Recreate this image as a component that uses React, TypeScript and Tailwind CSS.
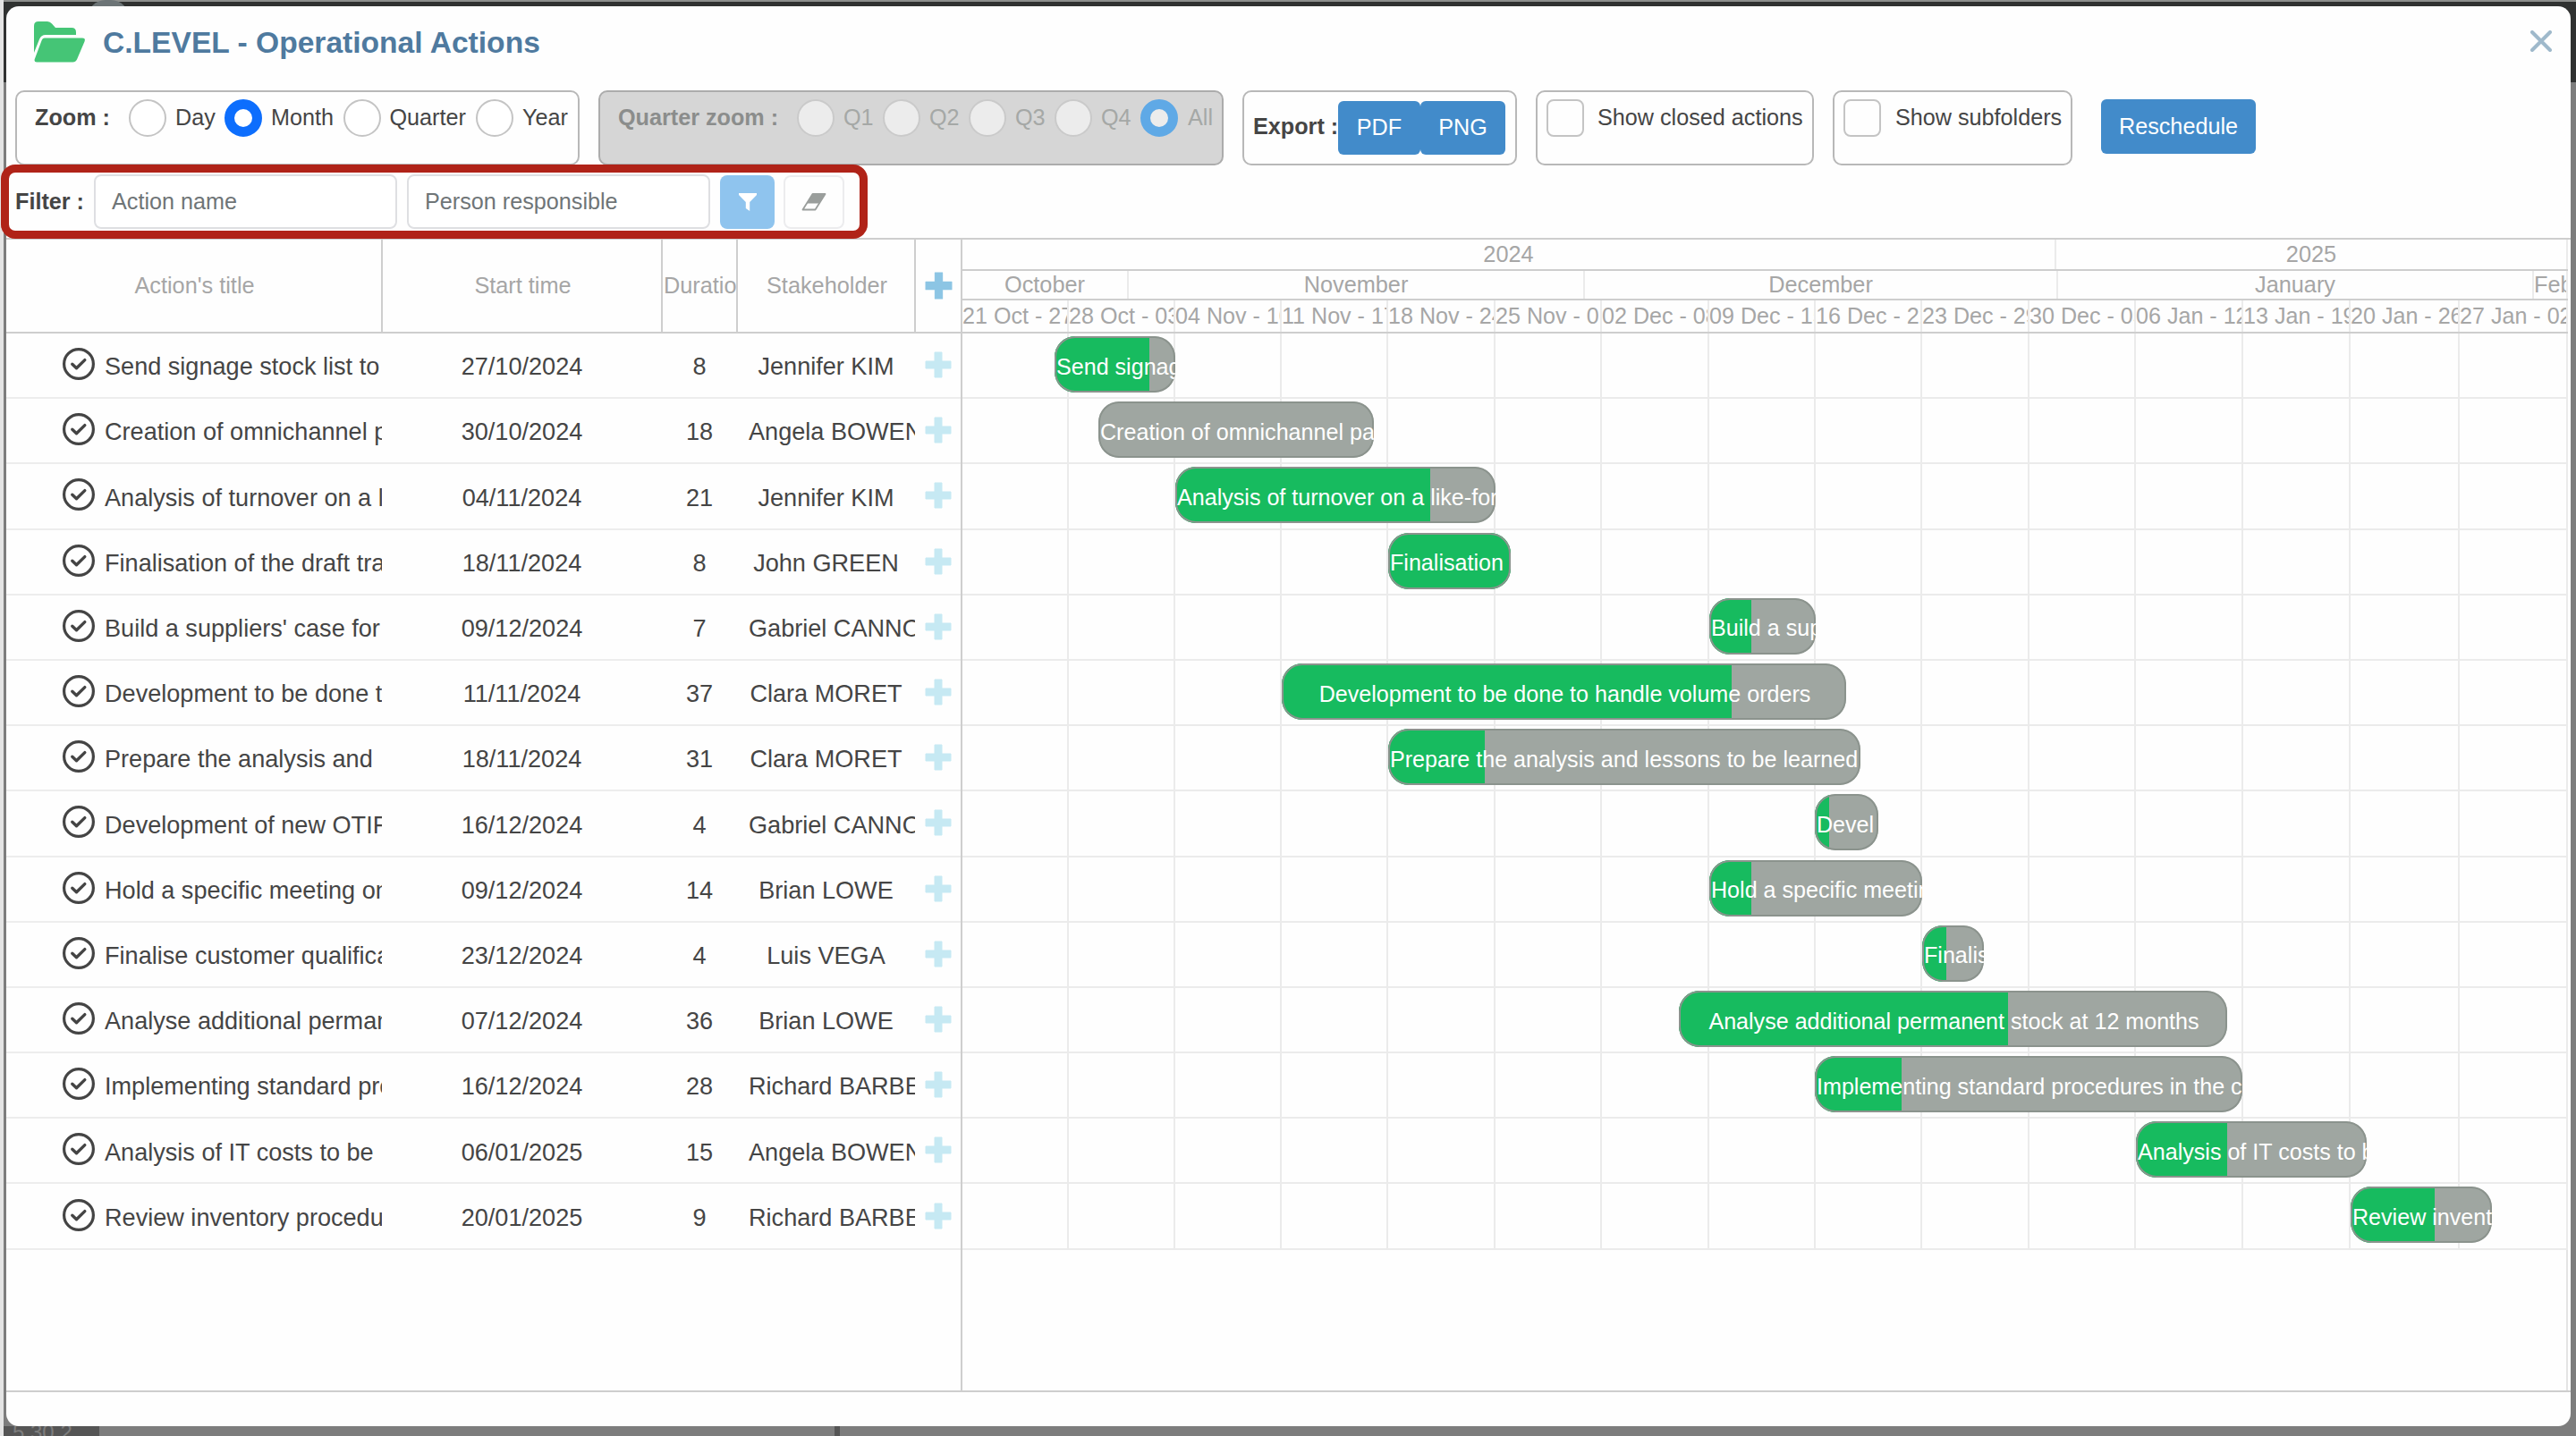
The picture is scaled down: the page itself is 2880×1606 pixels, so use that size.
import React from 'react';

type Task = {
  title: string;
  start: string;
  days: number;
  owner: string;
  left: number;
  right: number;
  done: number;
  label: string;
  centered?: boolean;
};

const CHART_LEFT = 1076;

const TASKS: Task[] = [
  { title: 'Send signage stock list to', start: '27/10/2024', days: 8, owner: 'Jennifer KIM', left: 1179, right: 1314, done: 1285, label: 'Send signage' },
  { title: 'Creation of omnichannel pa', start: '30/10/2024', days: 18, owner: 'Angela BOWEN', left: 1228, right: 1536, done: 1228, label: 'Creation of omnichannel pa' },
  { title: 'Analysis of turnover on a like', start: '04/11/2024', days: 21, owner: 'Jennifer KIM', left: 1314, right: 1672, done: 1599, label: 'Analysis of turnover on a like-for' },
  { title: 'Finalisation of the draft tran', start: '18/11/2024', days: 8, owner: 'John GREEN', left: 1552, right: 1689, done: 1689, label: 'Finalisation' },
  { title: "Build a suppliers' case for", start: '09/12/2024', days: 7, owner: 'Gabriel CANNON', left: 1911, right: 2030, done: 1958, label: 'Build a sup' },
  { title: 'Development to be done to', start: '11/11/2024', days: 37, owner: 'Clara MORET', left: 1433, right: 2064, done: 1936, label: 'Development to be done to handle volume orders', centered: true },
  { title: 'Prepare the analysis and', start: '18/11/2024', days: 31, owner: 'Clara MORET', left: 1552, right: 2080, done: 1660, label: 'Prepare the analysis and lessons to be learned' },
  { title: 'Development of new OTIF', start: '16/12/2024', days: 4, owner: 'Gabriel CANNON', left: 2029, right: 2100, done: 2045, label: 'Devel' },
  { title: 'Hold a specific meeting on', start: '09/12/2024', days: 14, owner: 'Brian LOWE', left: 1911, right: 2149, done: 1958, label: 'Hold a specific meetin' },
  { title: 'Finalise customer qualificat', start: '23/12/2024', days: 4, owner: 'Luis VEGA', left: 2149, right: 2218, done: 2176, label: 'Finalis' },
  { title: 'Analyse additional perman', start: '07/12/2024', days: 36, owner: 'Brian LOWE', left: 1877, right: 2490, done: 2245, label: 'Analyse additional permanent stock at 12 months', centered: true },
  { title: 'Implementing standard pro', start: '16/12/2024', days: 28, owner: 'Richard BARBER', left: 2029, right: 2507, done: 2126, label: 'Implementing standard procedures in the co' },
  { title: 'Analysis of IT costs to be', start: '06/01/2025', days: 15, owner: 'Angela BOWEN', left: 2388, right: 2646, done: 2490, label: 'Analysis of IT costs to b' },
  { title: 'Review inventory procedure', start: '20/01/2025', days: 9, owner: 'Richard BARBER', left: 2628, right: 2786, done: 2722, label: 'Review invent' },
];

const WEEKS = [
  { label: '21 Oct - 27', end: 1195 },
  { label: '28 Oct - 03', end: 1314 },
  { label: '04 Nov - 10', end: 1433 },
  { label: '11 Nov - 17', end: 1552 },
  { label: '18 Nov - 24', end: 1672 },
  { label: '25 Nov - 01', end: 1791 },
  { label: '02 Dec - 08', end: 1911 },
  { label: '09 Dec - 15', end: 2030 },
  { label: '16 Dec - 22', end: 2149 },
  { label: '23 Dec - 29', end: 2269 },
  { label: '30 Dec - 05', end: 2388 },
  { label: '06 Jan - 12', end: 2508 },
  { label: '13 Jan - 19', end: 2628 },
  { label: '20 Jan - 26', end: 2750 },
  { label: '27 Jan - 02', end: 2871 },
];

const MONTHS = [
  { label: 'October', end: 1262 },
  { label: 'November', end: 1772 },
  { label: 'December', end: 2301 },
  { label: 'January', end: 2833 },
  { label: 'Feb', end: 2871 },
];

const YEARS = [
  { label: '2024', end: 2299 },
  { label: '2025', end: 2871 },
];

function widths(cells: { end: number }[]) {
  return cells.map((c, i) => c.end - (i === 0 ? CHART_LEFT : cells[i - 1].end));
}

const WEEK_WIDTHS = widths(WEEKS);

function Radio({ label, checked, className = '' }: { label: string; checked?: boolean; className?: string }) {
  return (
    <span className={`flex items-center ${className}`}>
      {checked ? (
        <span className="h-[42px] w-[42px] shrink-0 rounded-full border-[11px] border-[#0d6efd] bg-white" />
      ) : (
        <span className="h-[42px] w-[42px] shrink-0 rounded-full border-2 border-[#c4c4c4] bg-white" />
      )}
      <span className="ml-[10px] whitespace-nowrap">{label}</span>
    </span>
  );
}

function Plus({ className }: { className: string }) {
  return (
    <svg viewBox="0 0 30 30" className={className} fill="currentColor">
      <path d="M11 1h8v10h10v8h-10v10h-8v-10h-10v-8h10z" stroke="currentColor" strokeWidth="1" strokeLinejoin="round" />
    </svg>
  );
}

function CheckBadge() {
  return (
    <svg viewBox="0 0 38 38" className="h-[38px] w-[38px] shrink-0" fill="none" stroke="#444" strokeLinecap="round" strokeLinejoin="round">
      <circle cx="19" cy="19" r="16.4" strokeWidth="3.2" />
      <path d="M11.8 19.3l4.7 4.5L25.8 14.6" strokeWidth="3.4" />
    </svg>
  );
}

function ScaleRow({ cells, center, className }: { cells: { label: string; end: number }[]; center?: boolean; className: string }) {
  const w = widths(cells);
  return (
    <div className={`flex ${className}`}>
      {cells.map((c, i) => (
        <div
          key={c.label}
          className={`flex shrink-0 items-center overflow-hidden whitespace-nowrap border-r-2 border-[#ebebeb] pt-px ${center && w[i] > 60 ? 'justify-center' : 'justify-start'}`}
          style={{ width: w[i] }}
        >
          {c.label}
        </div>
      ))}
    </div>
  );
}

function TaskRow({ task }: { task: Task }) {
  return (
    <div className="flex h-[73.2px]">
      <div className="flex w-[1067px] shrink-0 items-center border-b-2 border-[#ededed] pl-px text-[27.1px] text-[#454545]">
        <div className="flex w-[419px] shrink-0 items-center overflow-hidden pl-[61px]">
          <span className="-mt-[3px] flex">
            <CheckBadge />
          </span>
          <span className="ml-[10px] whitespace-nowrap pt-[4px]">{task.title}</span>
        </div>
        <div className="w-[313px] shrink-0 pt-[4px] text-center">{task.start}</div>
        <div className="w-[84px] shrink-0 pt-[4px] text-center">{task.days}</div>
        <div className={`w-[199px] shrink-0 overflow-hidden whitespace-nowrap pt-[4px] ${task.owner.length > 11 && task.owner !== 'Jennifer KIM' ? 'pl-[13px]' : 'text-center'}`}>{task.owner}</div>
        <div className="flex w-[51px] shrink-0 justify-center">
          <Plus className="-mt-px h-[30px] w-[30px] text-[#c6e9f3]" />
        </div>
      </div>
      <div className="w-[2px] shrink-0 bg-[#cecece]" />
      <div className="relative flex w-[1795px] shrink-0 border-b-2 border-[#ebebeb]">
        {WEEK_WIDTHS.map((w, i) => (
          <div key={i} className="shrink-0 border-r-2 border-[#ebebeb]" style={{ width: w }} />
        ))}
        <div
          className="absolute top-[3px] flex h-[63px] items-center overflow-hidden rounded-[23px] bg-[#9fa6a1]"
          style={{ left: task.left - CHART_LEFT, width: task.right - task.left }}
        >
          <div className="absolute inset-y-0 left-0 bg-[#17bb5f]" style={{ width: task.done - task.left }} />
          <div className="absolute inset-0 rounded-[23px] border-2 border-[#8b938d]" />
          <div className={`relative w-full whitespace-nowrap pl-[2px] pt-[6px] text-[25.1px] text-white ${task.centered ? 'text-center' : ''}`}>{task.label}</div>
        </div>
      </div>
    </div>
  );
}

export default function App() {
  return (
    <div className="relative h-[1606px] w-[2880px] overflow-hidden bg-[#7d7d7d] font-['Liberation_Sans',Arial,sans-serif]">
      <div className="absolute inset-x-0 top-0 h-[92px] border-t-2 border-[#8d8f8d] bg-[#303231]" />
      <div className="absolute left-0 top-0 h-full w-[4px] bg-[#e4e4e4]" />
      <div className="absolute left-[98px] top-0 h-[20px] w-[46px] rounded-t-full bg-[#6c7476]" />
      <div className="absolute bottom-0 left-[4px] h-[11px] w-[107px] overflow-hidden bg-[#555] pl-[10px] text-[24px] leading-[14px] text-[#7d7d7d]">5.30.2</div>
      <div className="absolute bottom-0 left-[933px] h-[12px] w-[6px] bg-[#555]" />

      <div className="absolute left-[7px] top-[7px] flex h-[1588px] w-[2867px] flex-col overflow-hidden rounded-[14px] bg-[#fefefe]">
        <header className="flex h-[94px] shrink-0 items-start">
          <svg viewBox="0 0 57 46" className="ml-[31px] mt-[17px] h-[46px] w-[57px]" fill="#45c576">
            <path d="M0 5Q0 0 5 0H15Q18 0 20 2.5L24 7H42Q47 7 47 12V15H13Q8 15 6 20L0 35Z" />
            <path d="M12 18.500H54Q58 18.500 56.500 22.500L48 42.500Q46.500 45.500 43.500 45.500H3Q-.5 45.500 1 41.500L8.500 21.500Q9.500 18.500 12 18.500Z" />
          </svg>
          <h1 className="ml-[20px] mt-[20px] text-[33.6px] font-bold leading-[42px] text-[#4f7a9f]">C.LEVEL - Operational Actions</h1>
          <svg viewBox="0 0 24 24" className="ml-auto mr-[21px] mt-[27px] h-[24px] w-[24px]" fill="none" stroke="#9fb9cb" strokeWidth="4" strokeLinecap="round">
            <path d="M2 2L22 22M22 2L2 22" />
          </svg>
        </header>

        <div className="flex h-[84px] shrink-0 items-start pl-[10px] text-[25.2px] text-[#454545]">
          <div className="flex h-[84px] w-[631px] shrink-0 rounded-[10px] border-2 border-[#b8b8b8] pl-[20px] pt-[8px]">
            <div className="flex h-[42px] items-center">
              <span className="w-[105px] font-bold">Zoom :</span>
              <Radio label="Day" className="w-[107px]" />
              <Radio label="Month" checked className="w-[132.500px]" />
              <Radio label="Quarter" className="w-[148.500px]" />
              <Radio label="Year" />
            </div>
          </div>
          <div className="ml-[21px] h-[84px] w-[699px] shrink-0 rounded-[10px] border-2 border-[#acacac] bg-[#d6d6d6] pl-[20px] pt-[8px]">
            <div className="flex h-[42px] items-center text-[#a5a8a6]">
              <span className="w-[200px] font-bold text-[#8b8d8c]">Quarter zoom :</span>
              {['Q1', 'Q2', 'Q3', 'Q4'].map((q) => (
                <span key={q} className="flex w-[96px] items-center">
                  <span className="h-[42px] w-[42px] rounded-full border-2 border-[#cacaca] bg-[#ececec]" />
                  <span className="ml-[10px]">{q}</span>
                </span>
              ))}
              <span className="flex items-center">
                <span className="h-[42px] w-[42px] rounded-full border-[11px] border-[#5fa9e6] bg-[#ececec]" />
                <span className="ml-[11px]">All</span>
              </span>
            </div>
          </div>
          <div className="ml-[21px] flex h-[84px] w-[307px] shrink-0 items-start rounded-[10px] border-2 border-[#b8b8b8] pl-[10px] pt-[10px]">
            <span className="w-[95px] whitespace-nowrap pt-[12px] font-bold leading-[32px]">Export :</span>
            <span className="flex h-[60px] w-[92px] items-center justify-center rounded-[6px] bg-[#428bca] text-white">PDF</span>
            <span className="flex h-[60px] w-[95px] items-center justify-center rounded-[6px] bg-[#428bca] text-white">PNG</span>
          </div>
          <div className="ml-[21px] flex h-[84px] w-[311px] shrink-0 rounded-[10px] border-2 border-[#b8b8b8] pl-[10px] pt-[8px]">
            <div className="flex h-[42px] items-center">
              <span className="h-[42px] w-[42px] rounded-[8px] border-2 border-[#c4c4c4]" />
              <span className="ml-[15px] whitespace-nowrap">Show closed actions</span>
            </div>
          </div>
          <div className="ml-[21px] flex h-[84px] w-[268px] shrink-0 rounded-[10px] border-2 border-[#b8b8b8] pl-[10px] pt-[8px]">
            <div className="flex h-[42px] items-center">
              <span className="h-[42px] w-[42px] rounded-[8px] border-2 border-[#c4c4c4]" />
              <span className="ml-[16px] whitespace-nowrap">Show subfolders</span>
            </div>
          </div>
          <span className="ml-[32px] mt-[10px] flex h-[61px] w-[173px] items-center justify-center rounded-[6px] bg-[#428bca] text-white">Reschedule</span>
        </div>

        <div className="flex h-[81px] shrink-0 items-center pl-[10px] text-[25.2px]">
          <span className="w-[88px] whitespace-nowrap font-bold text-[#454545]">Filter :</span>
          <span className="flex h-[61px] w-[339px] items-center rounded-[8px] border-2 border-[#dedfe2] bg-white pl-[18px] text-[#6f7577]">Action name</span>
          <span className="ml-[11px] flex h-[61px] w-[339px] items-center rounded-[8px] border-2 border-[#dedfe2] bg-white pl-[18px] text-[#6f7577]">Person responsible</span>
          <span className="ml-[11px] flex h-[60px] w-[61px] items-center justify-center rounded-[8px] bg-[#8fc4ee]">
            <svg viewBox="0 0 20 20" className="h-[20px] w-[20px]" fill="#fff">
              <path d="M0 0H20V2L12.200 10V20L7.800 17V10L0 2Z" />
            </svg>
          </span>
          <span className="ml-[10px] flex h-[60px] w-[68px] items-center justify-center rounded-[8px] border-2 border-[#ececee]">
            <svg viewBox="0 0 28 20" className="h-[20px] w-[28px]">
              <path d="M12.500 1H26.500L15.500 18.500H1.500Z" fill="none" stroke="#9a9e9c" strokeWidth="1.800" strokeLinejoin="round" />
              <path d="M12.500 1H26.500L20 11.500H6Z" fill="#9a9e9c" />
            </svg>
          </span>
        </div>

        <div className="flex h-[1291px] shrink-0 flex-col border-y-2 border-[#cecece]">
          <div className="flex h-[105px] shrink-0 text-[25.3px] text-[#a6a6a6]">
            <div className="flex w-[1067px] shrink-0 border-b-2 border-[#cecece]">
              <div className="flex w-[421px] shrink-0 items-center justify-center border-r-2 border-[#cecece] pl-[2px]">Action's title</div>
              <div className="flex w-[313px] shrink-0 items-center justify-center border-r-2 border-[#cecece] pl-[2px]">Start time</div>
              <div className="flex w-[84px] shrink-0 items-center overflow-hidden border-r-2 border-[#cecece] pl-px">Duration</div>
              <div className="flex w-[199px] shrink-0 items-center justify-center border-r-2 border-[#cecece] pl-[2px]">Stakeholder</div>
              <div className="flex w-[50px] shrink-0 items-center justify-center">
                <Plus className="h-[31px] w-[31px] text-[#8cc5e4]" />
              </div>
            </div>
            <div className="w-[2px] shrink-0 bg-[#cecece]" />
            <div className="flex w-[1795px] shrink-0 flex-col">
              <ScaleRow cells={YEARS} center className="h-[35px] border-b-2 border-[#cecece]" />
              <ScaleRow cells={MONTHS} center className="h-[33px] border-b-2 border-[#cecece]" />
              <ScaleRow cells={WEEKS} className="h-[37px] border-b-2 border-[#cecece] text-[25.1px]" />
            </div>
          </div>
          {TASKS.map((t) => (
            <TaskRow key={t.title} task={t} />
          ))}
          <div className="flex flex-1">
            <div className="w-[1067px] shrink-0" />
            <div className="w-[2px] bg-[#cecece]" />
            <div className="w-[1795px] border-r-2 border-[#e4e4e4]" />
          </div>
        </div>
      </div>

      <div className="absolute left-px top-[184px] h-[83px] w-[969px] rounded-[16px] border-[9px] border-[#b02318]" />
    </div>
  );
}
